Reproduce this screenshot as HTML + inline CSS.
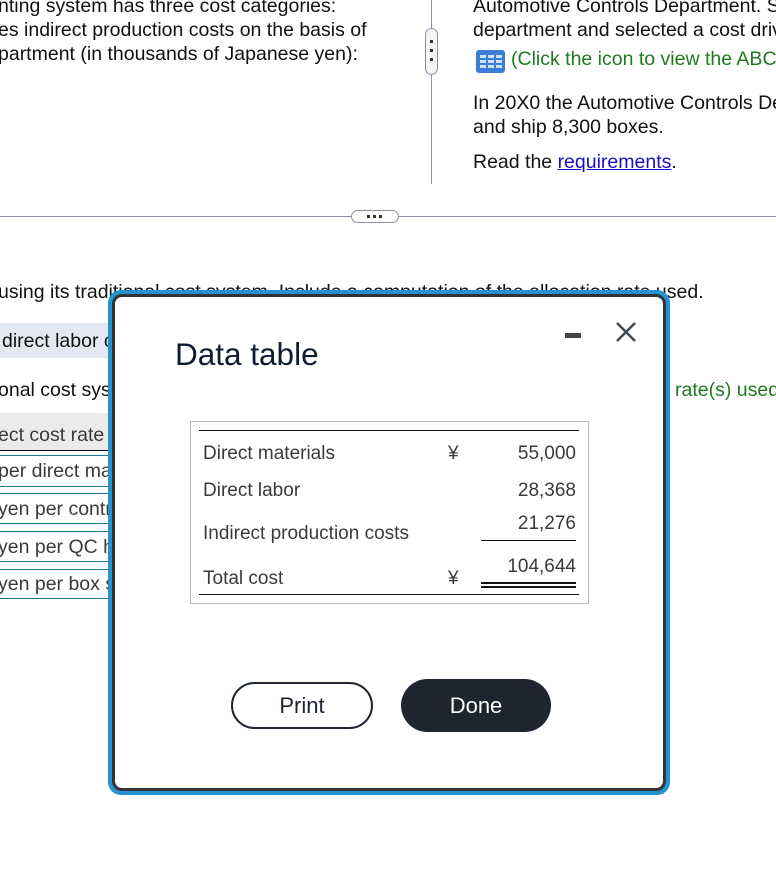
<!DOCTYPE html>
<html><head><meta charset="utf-8"><style>
*{margin:0;padding:0;box-sizing:border-box}
body{width:776px;height:869px;overflow:hidden;background:#fff;font-family:"Liberation Sans",Arial,sans-serif;position:relative;color:#111}
.a{position:absolute;white-space:nowrap}
.t{font-size:19.5px;line-height:24px}
.s{font-size:19px;line-height:24px}
.g{color:#3a3a3a}
</style></head><body>
<div class="a t" style="left:-2px;top:-6px">nting system has three cost categories:</div>
<div class="a t" style="left:-2px;top:18px">es indirect production costs on the basis of</div>
<div class="a t" style="left:-2px;top:42px">partment (in thousands of Japanese yen):</div>

<div class="a" style="left:431px;top:0;width:1px;height:184px;background:#8a93a3"></div>
<div class="a" style="left:425px;top:28px;width:13px;height:47px;border:1px solid #8a93a3;border-radius:7px;background:#f4f5f7"></div>
<div class="a" style="left:430px;top:40px;width:3px;height:3px;background:#333"></div>
<div class="a" style="left:430px;top:49px;width:3px;height:3px;background:#333"></div>
<div class="a" style="left:430px;top:58px;width:3px;height:3px;background:#333"></div>

<div class="a t" style="left:473px;top:-6px">Automotive Controls Department. S</div>
<div class="a t" style="left:473px;top:18px">department and selected a cost driv</div>
<div class="a" style="left:476px;top:50px;width:29px;height:23px;background:#3a7fd5;border-radius:3px"></div>
<svg class="a" style="left:476px;top:50px" width="29" height="23"><g fill="#cfe0f7"><rect x="4" y="5" width="6" height="3"/><rect x="12" y="5" width="6" height="3"/><rect x="20" y="5" width="6" height="3"/><rect x="4" y="10" width="6" height="3"/><rect x="12" y="10" width="6" height="3"/><rect x="20" y="10" width="6" height="3"/><rect x="4" y="15" width="6" height="3"/><rect x="12" y="15" width="6" height="3"/><rect x="20" y="15" width="6" height="3"/></g></svg>
<div class="a t" style="left:511px;top:47px;color:#1f7a1f">(Click the icon to view the ABC</div>
<div class="a t" style="left:473px;top:91px">In 20X0 the Automotive Controls De</div>
<div class="a t" style="left:473px;top:115px">and ship 8,300 boxes.</div>
<div class="a t" style="left:473px;top:150px">Read the <span style="color:#1a0dcc;text-decoration:underline">requirements</span>.</div>

<div class="a" style="left:0;top:216px;width:776px;height:1px;background:#8a93a3"></div>
<div class="a" style="left:351px;top:210px;width:48px;height:13px;border:1px solid #8a93a3;border-radius:7px;background:#fff"></div>
<div class="a" style="left:367px;top:215px;width:3px;height:3px;background:#333"></div>
<div class="a" style="left:373px;top:215px;width:3px;height:3px;background:#333"></div>
<div class="a" style="left:379px;top:215px;width:3px;height:3px;background:#333"></div>

<div class="a t" style="left:-2px;top:280px">using its traditional cost system. Include a computation of the allocation rate used.</div>
<div class="a" style="left:0;top:323px;width:115px;height:35px;background:#e3e8f2"></div>
<div class="a t" style="left:2px;top:329px">direct labor c</div>
<div class="a t" style="left:-2px;top:378px">onal cost sys</div>
<div class="a t" style="left:675px;top:378px;color:#1f7a1f">rate(s) used</div>
<div class="a" style="left:0;top:413px;width:115px;height:38px;background:#ebebeb;border-bottom:1px solid #111"></div>
<div class="a t g" style="left:-2px;top:423px">ect cost rate</div>
<div class="a" style="left:0;top:455px;width:115px;height:32px;border-top:1px solid #1f7a9a;border-bottom:1px solid #1f7a9a"></div>
<div class="a t g" style="left:-2px;top:459px">per direct ma</div>
<div class="a" style="left:0;top:493px;width:115px;height:31px;border-top:1px solid #1f7a9a;border-bottom:1px solid #1f7a9a"></div>
<div class="a t g" style="left:-2px;top:497px">yen per contr</div>
<div class="a" style="left:0;top:531px;width:115px;height:31px;border-top:1px solid #1f7a9a;border-bottom:1px solid #1f7a9a"></div>
<div class="a t g" style="left:-2px;top:535px">yen per QC h</div>
<div class="a" style="left:0;top:569px;width:115px;height:30px;border-top:1px solid #1f7a9a;border-bottom:1px solid #1f7a9a"></div>
<div class="a t g" style="left:-2px;top:572px">yen per box s</div>

<div class="a" style="left:108px;top:290px;width:562px;height:505px;border-radius:13px;background:#2393d0;padding:4px 4px 4px 4px">
 <div style="width:100%;height:100%;background:#fff;border:3px solid #333;border-radius:10px"></div>
</div>
<div class="a" style="left:175px;top:336px;font-size:31.5px;line-height:36px;color:#0f1b33">Data table</div>
<div class="a" style="left:565px;top:333px;width:16px;height:5px;background:#444"></div>
<svg class="a" style="left:614px;top:320px" width="24" height="24"><path d="M3 3L21 21M21 3L3 21" stroke="#444b55" stroke-width="2.6"/></svg>

<div class="a" style="left:190px;top:421px;width:399px;height:183px;border:1px solid #bbb"></div>
<div class="a" style="left:199px;top:430px;width:380px;height:1px;background:#111"></div>
<div class="a" style="left:199px;top:594px;width:380px;height:1px;background:#111"></div>
<div class="a s g" style="left:203px;top:442px">Direct materials</div>
<div class="a s g" style="left:203px;top:479px">Direct labor</div>
<div class="a s g" style="left:203px;top:522px">Indirect production costs</div>
<div class="a s g" style="left:203px;top:567px">Total cost</div>
<div class="a s g" style="left:448px;top:442px">¥</div>
<div class="a s g" style="left:448px;top:567px">¥</div>
<div class="a s g" style="right:200px;top:442px">55,000</div>
<div class="a s g" style="right:200px;top:479px">28,368</div>
<div class="a s g" style="right:200px;top:512px">21,276</div>
<div class="a s g" style="right:200px;top:555px">104,644</div>
<div class="a" style="left:481px;top:540px;width:95px;height:1px;background:#111"></div>
<div class="a" style="left:481px;top:582px;width:95px;height:6px;border-top:2px solid #111;border-bottom:2px solid #111"></div>

<div class="a" style="left:231px;top:682px;width:142px;height:47px;border:2px solid #1e2430;border-radius:24px;text-align:center;font-size:22px;line-height:43px;color:#1e2430">Print</div>
<div class="a" style="left:401px;top:679px;width:150px;height:53px;background:#1e2430;border-radius:27px;text-align:center;font-size:22px;line-height:53px;color:#fff">Done</div>
</body></html>
